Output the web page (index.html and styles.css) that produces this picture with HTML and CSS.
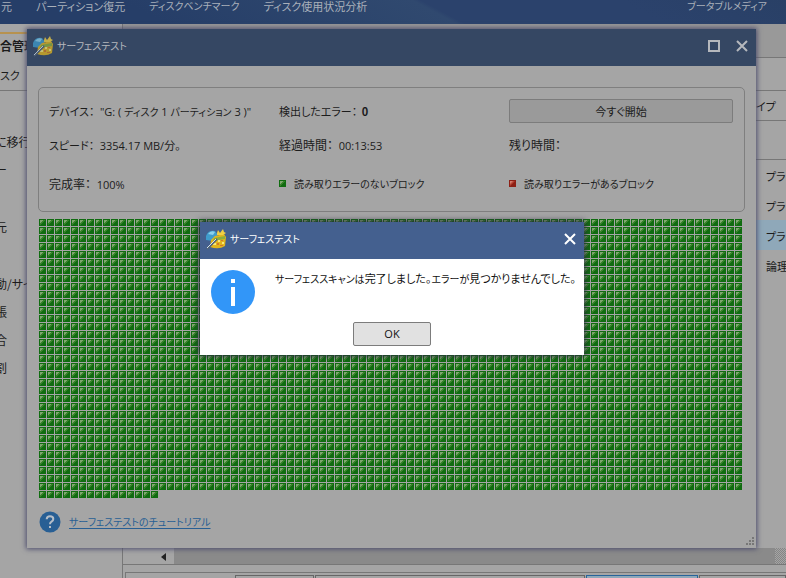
FILE: index.html
```html
<!DOCTYPE html>
<html lang="ja">
<head>
<meta charset="utf-8">
<title>サーフェステスト</title>
<link rel="stylesheet" href="styles.css">
</head>
<body>
<svg class="defs" aria-hidden="true">
  <defs>
    <g id="logo">
      <path d="M1 8Q3 2 10 3L13 7 8 13 1 12Z" fill="#3f9ccc"/>
      <path d="M3 6Q6 2 10 4L8 7Z" fill="#8bd1ed"/>
      <path d="M6 12 10 8 19 6 21 9 20 18Q14 22 5 19Z" fill="#e2b51d"/>
      <path d="M9 10 20 8 20 11 8 13Z" fill="#8eae3b"/>
      <path d="M12 5 13 2 15 5 18 1 19 4 21 5 18 7 12 7Z" fill="#f1cf42"/>
      <path d="M8 15h3v2h-3zM13 12h2v2h-2zM17 14h2v2h-2z" fill="#fae779"/>
      <path d="M12 15h2v2h-2zM15 17h3v1h-3zM16 12h2v1h-2z" fill="#d4782a"/>
      <path d="M2 21 12 11" stroke="#526478" stroke-width="2"/>
      <path d="M2 20 11 11" stroke="#d6e1e7"/>
    </g>
    <g id="tile" shape-rendering="crispEdges">
      <rect width="7" height="7" fill="#106c10"/>
      <path d="M1 1h5v1h-1v1h-1v1h-1v1h-1v1h-1z" fill="#38832a"/>
      <path d="M1 1h3v1h-1v1h-1v1h-1z" fill="#7fa76f"/>
    </g>
    <pattern id="tiles" width="8" height="8" patternUnits="userSpaceOnUse"><use href="#tile"/></pattern>
  </defs>
</svg>
<header class="topbar">
  <nav>
    <a href="#">元</a><a href="#">パーティション復元</a><a class="small" href="#">ディスクベンチマーク</a><a href="#">ディスク使用状況分析</a>
  </nav>
  <a class="small" href="#">ブータブルメディア</a>
</header>
<div class="app">
  <aside>
    <h2>合管理</h2>
    <p class="sub">スク</p>
    <ul>
      <li>に移行</li>
      <li class="gap">ー</li>
      <li class="gap">元</li>
      <li>動/サイ</li><li>張</li><li>合</li><li>割</li>
    </ul>
  </aside>
  <main>
    <div class="tabstrip"></div>
    <table>
      <thead><tr><th>イプ</th></tr></thead>
      <tbody>
        <tr class="blank"><td></td></tr>
        <tr><td>プライ</td></tr>
        <tr><td>プライ</td></tr>
        <tr class="selected"><td>プライ</td></tr>
        <tr><td>論理</td></tr>
      </tbody>
    </table>
    <div class="scroll"><button aria-label="左へ"><svg viewBox="0 0 5 8"><path d="M5 0V8L0 4Z" fill="#222"/></svg></button><div class="thumb"></div><div class="track"></div></div>
    <div class="diskmap"><span></span><span></span><span class="on"></span><span></span></div>
  </main>
</div>

<section class="window">
  <div class="titlebar">
    <svg class="logo" viewBox="0 0 22 22"><use href="#logo"/></svg>
    <h1>サーフェステスト</h1>
    <button aria-label="最大化"><svg viewBox="0 0 12 12"><path d="M1 1H11V11H1Z" fill="none" stroke="currentColor" stroke-width="2"/></svg></button>
    <button aria-label="閉じる"><svg viewBox="0 0 12 12"><path d="M1 1 11 11M11 1 1 11" stroke="currentColor" stroke-width="2"/></svg></button>
  </div>
  <div class="content">
    <div class="panel">
      <p>デバイス： <span>"G: ( <i>ディスク</i> 1 <i>パーティション</i> 3 )"</span></p>
      <p>検出したエラー： <b>0</b></p>
      <button class="btn">今すぐ開始</button>
      <p>スピード： <span>3354.17 MB/分。</span></p>
      <p class="kanji">経過時間： <span>00:13:53</span></p>
      <p class="kanji">残り時間：</p>
      <p class="kanji">完成率： <span>100%</span></p>
      <p class="key"><svg viewBox="0 0 7 7"><use href="#tile"/></svg>読み取りエラーのないブロック</p>
      <p class="key"><svg viewBox="0 0 7 7"><path d="M0 0h7v7h-7z" fill="#8d2015"/><path d="M1 1h5L1 6z" fill="#b84535"/><path d="M1 1h3L1 4z" fill="#d07b6c"/></svg>読み取りエラーがあるブロック</p>
    </div>
    <svg class="blocks" role="img" aria-label="ブロック"><rect width="704" height="272" fill="url(#tiles)"/><rect y="272" width="120" height="8" fill="url(#tiles)"/></svg>
    <div class="help">
      <svg viewBox="0 0 22 22"><circle cx="11" cy="11" r="10.5" fill="#285f94"/><path d="M7.7 8.3Q7.8 5.3 11 5.3Q14.3 5.3 14.3 8Q14.3 9.5 12.5 10.7Q11 11.6 11 13.2" fill="none" stroke="#b5bec8" stroke-width="2"/><path d="M10 15h2v2h-2z" fill="#b5bec8"/></svg>
      <a class="small" href="#">サーフェステストのチュートリアル</a>
      <svg class="grip" viewBox="0 0 8 8"><path d="M6 0h2v2h-2zM3 3h2v2h-2zM6 3h2v2h-2zM0 6h2v2h-2zM3 6h2v2h-2zM6 6h2v2h-2z" fill="#777"/></svg>
    </div>
  </div>
</section>

<section class="dialog" role="dialog" aria-label="サーフェステスト">
  <div class="titlebar">
    <svg class="logo" viewBox="0 0 22 22"><use href="#logo"/></svg>
    <h1>サーフェステスト</h1>
    <button aria-label="閉じる"><svg viewBox="0 0 12 12"><path d="M1 1 11 11M11 1 1 11" stroke="currentColor" stroke-width="2"/></svg></button>
  </div>
  <div class="message">
    <svg viewBox="0 0 44 44"><circle cx="22" cy="22" r="22" fill="#3296f8"/><path d="M20 9h4v4h-4zM20 17h4v19h-4z" fill="#fff"/></svg>
    <p><span class="small">サーフェススキャンは</span>完了しました。<span class="small">エラーが</span>見つかりませんでした。</p>
  </div>
  <button class="btn ok">OK</button>
</section>
</body>
</html>
```
FILE: styles.css
```css
* { box-sizing: border-box; }
body {
  margin: 0;
  height: 100vh;
  display: flex;
  flex-direction: column;
  overflow: hidden;
  position: relative;
  background: #a5a5a5;
  color: #1c1c1c;
  font: 11px/16px "Noto Sans CJK JP", sans-serif;
  font-feature-settings: "palt";
  white-space: nowrap;
}
h1, h2, p, ul { margin: 0; padding: 0; font-size: 11px; font-weight: 400; }
button { padding: 0; border: 0; background: none; font: inherit; color: inherit; }
.defs { position: absolute; width: 0; height: 0; }
.small, h1 { font-size: 10px; }

.topbar {
  height: 24px;
  flex: none;
  display: flex;
  justify-content: space-between;
  padding: 0 19px 0 1px;
  line-height: 12px;
  background: linear-gradient(28deg, #263e68 0 20%, #30496f 55%, #2b426c 56% 80%, #294066);
}
.topbar nav { display: flex; gap: 24px; }
.topbar a { color: #a9b0ba; text-decoration: none; }

.app { flex: 1; display: flex; min-height: 0; }
aside { width: 123px; flex: none; border-right: 1px solid #777; padding-top: 8px; }
aside h2 { border-top: 2px solid #b7924f; font-size: 12px; font-weight: 700; line-height: 24px; }
aside .sub { padding: 8px 0 6px; line-height: 18px; border-bottom: 1px solid #777; }
aside ul { list-style: none; padding-top: 37px; font-size: 12px; text-indent: -5px; line-height: 28px; }
aside .gap { margin-bottom: 29px; }

main { flex: 1; min-width: 0; display: flex; flex-direction: column; }
.tabstrip { height: 34px; background: #999; border-bottom: 1px solid #777; }
main table { border-collapse: collapse; width: 100%; margin-top: 32px; table-layout: fixed; }
main th, main td { height: 30px; padding: 2px 0 0 643px; text-align: left; font-weight: 400; overflow: hidden; }
main th { padding: 0 0 0 633px; border-top: 1px solid #777; border-bottom: 1px solid #777; }
.blank td { height: 39px; border-bottom: 1px solid #777; }
.selected { background: #8fa8b9; }
.scroll { margin-top: auto; height: 17px; display: flex; border-bottom: 1px solid #777; }
.scroll button { width: 51px; text-align: right; padding-right: 8px; line-height: 8px; }
.scroll button svg { width: 5px; height: 8px; }
.thumb { flex: 1; background: #8a8a8a; }
.track { width: 11px; background: repeating-conic-gradient(#858585 0 25%, #a5a5a5 0 50%) 0 0 / 2px 2px; }
.diskmap {
  display: grid;
  grid-template-columns: 79px 270px 112px 1fr;
  gap: 1px;
  height: 6px;
  margin: 7px 0 0 2px;
  padding: 2px 0 0 109px;
  border: 1px solid #777;
  border-width: 1px 0 0 1px;
}
.diskmap span { border: 1px solid #666; border-bottom: 0; }
.diskmap .on { border-color: #28649a; background: #8fa8b9; }

.window { position: absolute; top: 29px; left: 27px; right: 30px; background: #a5a5a5; box-shadow: 0 0 5px 1px #4c4c6c; }
.titlebar { display: flex; align-items: center; height: 37px; padding: 0 8px 3px 5px; background: #354763; color: #b5b8bd; }
.titlebar .logo { width: 22px; height: 22px; margin-right: 3px; }
.titlebar h1 { flex: 1; }
.titlebar button { display: flex; margin-left: 16px; }
.titlebar button svg { width: 12px; height: 12px; }
.window .logo { opacity: .75; }
.content { padding: 21px 11px 3px; }
.panel {
  display: grid;
  grid-template-columns: 230px 230px 1fr;
  grid-template-rows: 24px 44px 34px;
  height: 125px;
  padding: 11px 11px 11px 10px;
  border: 1px solid #7f7f7f;
  border-radius: 5px;
  align-items: center;
}
.panel .kanji { font-size: 12px; }
.panel span, .ok { font-family: "Open Sans", "Noto Sans CJK JP", sans-serif; font-size: 11px; }
.panel span { margin-left: 3px; }
.panel b { margin-left: 2px; }
.panel i { font-size: 10px; font-style: normal; }
.btn { border: 1px solid #7c7c7c; border-radius: 2px; background: #9a9a9a; height: 24px; }
.panel .key { font-size: 10px; }
.key svg { width: 7px; height: 7px; margin-right: 8px; vertical-align: 1px; }
.blocks { display: block; width: 100%; height: 279px; margin: 7px 0 0 1px; }
.help { display: flex; align-items: center; height: 47px; padding-left: 1px; gap: 8px; }
.help svg { width: 22px; height: 22px; }
.help a { color: #285f94; text-underline-offset: 2px; }
.help .grip { width: 8px; height: 8px; margin: auto -9px 0 auto; }

.dialog { position: absolute; top: 222px; left: 200px; width: 384px; padding-bottom: 9px; background: #fff; box-shadow: 0 0 6px 1px #2c2c40; color: #111; }
.dialog .titlebar { background: #44608f; color: #fff; }
.message { display: flex; gap: 20px; padding: 11px 11px 8px; }
.message svg { width: 44px; height: 44px; flex: none; }
.ok { display: block; width: 78px; margin: 0 auto; background: #e1e1e1; }
```
